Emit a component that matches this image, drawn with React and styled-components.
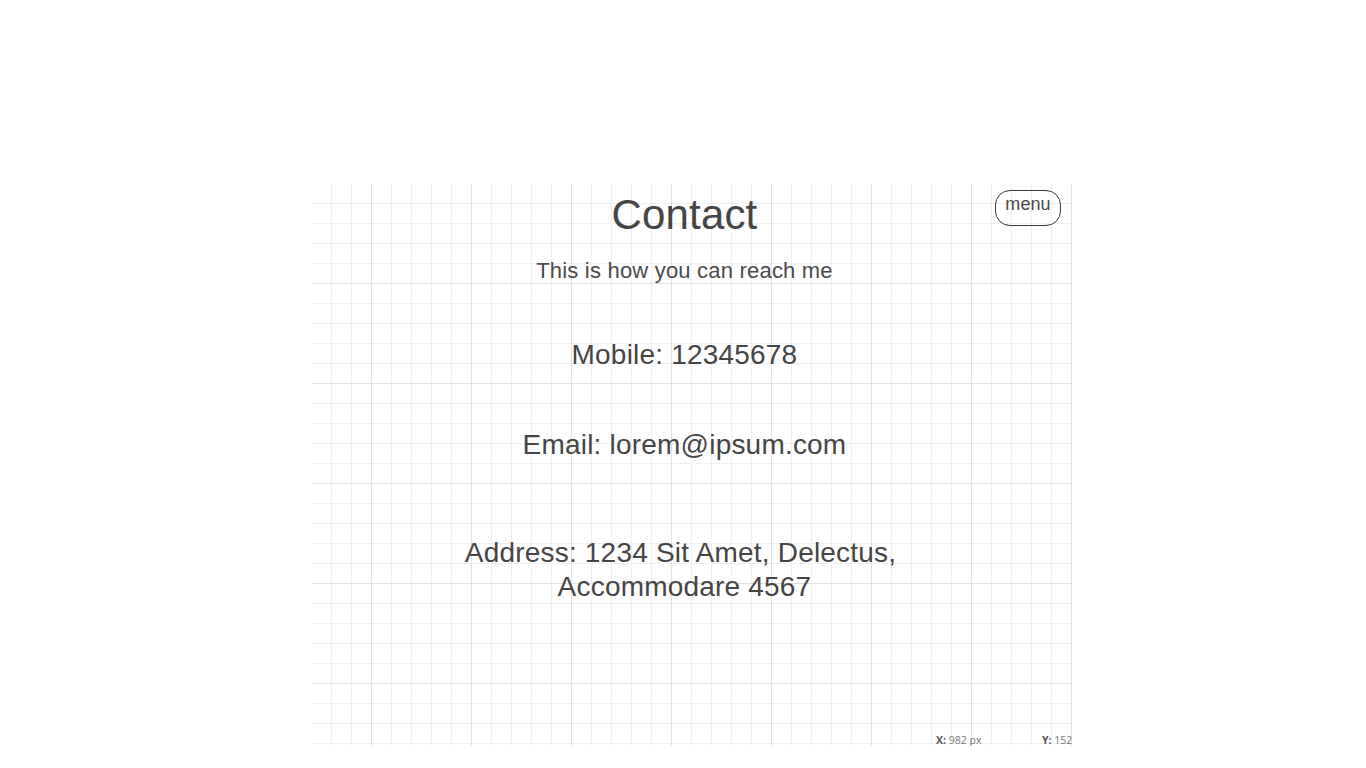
import React from "react"
import styled, { createGlobalStyle } from "styled-components"

const GlobalStyle = createGlobalStyle`
    html, body {
        margin: 0;
        padding: 0;
        background: #ffffff;
    }
    body {
        font-family: "Liberation Sans", Arial, sans-serif;
        color: #454545;
    }
`

const Page = styled.div`
    width: 1366px;
    height: 768px;
    overflow: hidden;
`

const Sheet = styled.div`
    position: relative;
    overflow: hidden;
    box-sizing: border-box;
    width: 760px;
    height: 562px;
    margin: 184px 0 0 312px;
    padding: 7px 15px 0 0;
    display: flex;
    flex-direction: column;
    align-items: center;
    text-align: center;
    letter-spacing: 0.2px;
    background-color: #ffffff;
    background-image:
        linear-gradient(to right, transparent 99px, #e1e1e1 99px, #e1e1e1 100px),
        linear-gradient(to bottom, transparent 99px, #e1e1e1 99px, #e1e1e1 100px),
        linear-gradient(to right, transparent 19px, #efefef 19px, #efefef 20px),
        linear-gradient(to bottom, transparent 19px, #efefef 19px, #efefef 20px);
    background-size: 100px 100px, 100px 100px, 20px 20px, 20px 20px;
    background-position: -40px 0, -40px 0, 0 0, 0 0;
`

const Title = styled.h1`
    margin: 0;
    font-size: 42px;
    line-height: 48px;
    font-weight: 400;
    letter-spacing: 0.15px;
    color: #454545;
`

const Subtitle = styled.p`
    margin: 19px 0 0;
    font-size: 22px;
    line-height: 26px;
    color: #4a4a4a;
`

const Detail = styled.p`
    margin: ${props => props.$gap}px 0 0;
    max-width: ${props => props.$wrap ? "470px" : "none"};
    font-size: 28px;
    line-height: 33.6px;
    color: #454545;
`

const MenuButton = styled.button`
    position: absolute;
    top: 6px;
    right: 11px;
    box-sizing: border-box;
    width: 66px;
    height: 36px;
    padding: 3px 0 0;
    display: flex;
    justify-content: center;
    align-items: flex-start;
    border: 1px solid #3a3a3a;
    border-radius: 15px;
    background: transparent;
    font-family: "Liberation Sans", Arial, sans-serif;
    font-size: 18px;
    line-height: 20px;
    letter-spacing: 0.1px;
    color: #4a4a4a;
    cursor: pointer;
`

const Coords = styled.div`
    position: absolute;
    left: 624px;
    bottom: 0;
    display: flex;
    white-space: nowrap;
    font-family: "Open Sans", "Noto Sans", sans-serif;
    font-size: 10.5px;
    line-height: 12px;
    letter-spacing: 0;
    color: #777777;
`

const Coord = styled.span`
    display: block;
    width: ${props => props.$width}px;
    text-align: left;

    b {
        font-weight: 700;
        color: #555555;
    }
`

const details = [
    { text: "Mobile: 12345678", gap: 54 },
    { text: "Email: lorem@ipsum.com", gap: 56 },
    { text: "Address: 1234 Sit Amet, Delectus,\u00a0 Accommodare 4567", gap: 75, wrap: true }
]

const App = () => {
    return (
        <Page>
            <GlobalStyle />
            <Sheet>
                <Title>Contact</Title>
                <Subtitle>This is how you can reach me</Subtitle>
                {details.map((item, index) => (
                    <Detail key={index} $gap={item.gap} $wrap={item.wrap}>
                        {item.text}
                    </Detail>
                ))}
                <MenuButton>menu</MenuButton>
                <Coords>
                    <Coord $width={106}><b>X:</b> 982 px</Coord>
                    <Coord $width={30}><b>Y:</b> 152</Coord>
                </Coords>
            </Sheet>
        </Page>
    )
}

export default App
